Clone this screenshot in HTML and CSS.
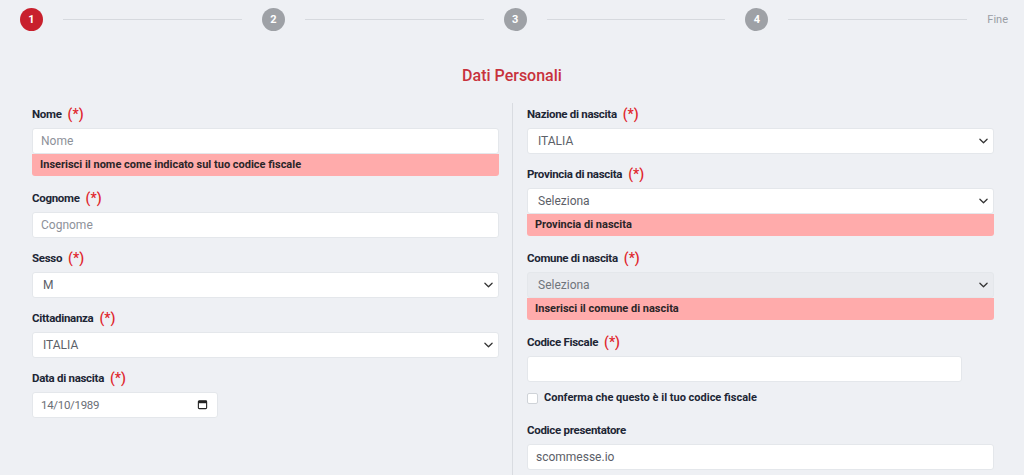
FILE: index.html
```html
<!DOCTYPE html>
<html lang="it">
<head>
<meta charset="utf-8">
<title>Registrazione - Dati Personali</title>
<link rel="stylesheet" href="styles.css">
</head>
<body>
<nav class="stepper">
  <span class="step-dot active">1</span>
  <span class="step-line"></span>
  <span class="step-dot">2</span>
  <span class="step-line"></span>
  <span class="step-dot">3</span>
  <span class="step-line"></span>
  <span class="step-dot">4</span>
  <span class="step-line"></span>
  <span class="step-end">Fine</span>
</nav>

<h1 class="section-title">Dati Personali</h1>

<form class="form-grid">
  <div class="col col-left">
    <div class="field">
      <label class="label">Nome <span class="req">(*)</span></label>
      <input class="control" type="text" placeholder="Nome">
      <div class="error">Inserisci il nome come indicato sul tuo codice fiscale</div>
    </div>
    <div class="field">
      <label class="label">Cognome <span class="req">(*)</span></label>
      <input class="control" type="text" placeholder="Cognome">
    </div>
    <div class="field">
      <label class="label">Sesso <span class="req">(*)</span></label>
      <div class="select-wrap">
        <select class="control select"><option>M</option><option>F</option></select>
        <svg class="chev" viewBox="0 0 10 6"><path d="M1 1l4 4 4-4" fill="none" stroke="#333" stroke-width="1.4" stroke-linecap="round" stroke-linejoin="round"/></svg>
      </div>
    </div>
    <div class="field">
      <label class="label">Cittadinanza <span class="req">(*)</span></label>
      <div class="select-wrap">
        <select class="control select"><option>ITALIA</option></select>
        <svg class="chev" viewBox="0 0 10 6"><path d="M1 1l4 4 4-4" fill="none" stroke="#333" stroke-width="1.4" stroke-linecap="round" stroke-linejoin="round"/></svg>
      </div>
    </div>
    <div class="field">
      <label class="label">Data di nascita <span class="req">(*)</span></label>
      <div class="date-wrap">
        <input class="control date" type="text" value="14/10/1989">
        <svg class="cal" viewBox="0 0 12 12"><rect x="1.5" y="2" width="9" height="8.5" rx="1" fill="none" stroke="#222" stroke-width="1.2"/><rect x="1.5" y="2" width="9" height="2.6" fill="#222"/></svg>
      </div>
    </div>
  </div>

  <div class="col col-right">
    <div class="field">
      <label class="label">Nazione di nascita <span class="req">(*)</span></label>
      <div class="select-wrap">
        <select class="control select"><option>ITALIA</option></select>
        <svg class="chev" viewBox="0 0 10 6"><path d="M1 1l4 4 4-4" fill="none" stroke="#333" stroke-width="1.4" stroke-linecap="round" stroke-linejoin="round"/></svg>
      </div>
    </div>
    <div class="field">
      <label class="label">Provincia di nascita <span class="req">(*)</span></label>
      <div class="select-wrap">
        <select class="control select"><option>Seleziona</option></select>
        <svg class="chev" viewBox="0 0 10 6"><path d="M1 1l4 4 4-4" fill="none" stroke="#333" stroke-width="1.4" stroke-linecap="round" stroke-linejoin="round"/></svg>
      </div>
      <div class="error">Provincia di nascita</div>
    </div>
    <div class="field">
      <label class="label">Comune di nascita <span class="req">(*)</span></label>
      <div class="select-wrap">
        <select class="control select" disabled><option>Seleziona</option></select>
        <svg class="chev" viewBox="0 0 10 6"><path d="M1 1l4 4 4-4" fill="none" stroke="#333" stroke-width="1.4" stroke-linecap="round" stroke-linejoin="round"/></svg>
      </div>
      <div class="error">Inserisci il comune di nascita</div>
    </div>
    <div class="field">
      <label class="label">Codice Fiscale <span class="req">(*)</span></label>
      <input class="control control-cf" type="text">
    </div>
    <label class="check-row">
      <input class="check" type="checkbox">
      <span>Conferma che questo è il tuo codice fiscale</span>
    </label>
    <div class="field">
      <label class="label">Codice presentatore</label>
      <input class="control" type="text" value="scommesse.io">
    </div>
  </div>
</form>
</body>
</html>
```

FILE: styles.css
```css
* {
  box-sizing: border-box;
}

body {
  margin: 0;
  background: #eef0f4;
  font-family: Roboto, "Liberation Sans", sans-serif;
  color: #1d2635;
  overflow: hidden;
}

/* progress steps */
.stepper {
  display: flex;
  align-items: center;
  padding: 8px 16px 0 20px;
  height: 31px;
}

.step-dot {
  width: 23px;
  height: 23px;
  border-radius: 50%;
  background: #9ea1a6;
  color: #fff;
  font-size: 11px;
  font-weight: 700;
  display: flex;
  align-items: center;
  justify-content: center;
  flex: none;
}

.step-dot.active {
  background: #c8202d;
}

.step-line {
  flex: 1;
  height: 1px;
  background: #d6d9de;
  margin: 0 20px;
}

.step-line:last-of-type {
  margin-right: 18px;
}

.step-end {
  font-size: 11px;
  color: #9a9ea5;
}

.section-title {
  margin: 35px 0 0;
  text-align: center;
  font-size: 16px;
  line-height: 20px;
  font-weight: 500;
  color: #c8323c;
}

/* two-column form */
.form-grid {
  display: grid;
  grid-template-columns: 467px 482px;
  column-gap: 13px;
  padding: 0 30px 0 32px;
  margin-top: 17px;
}

.col {
  display: flex;
  flex-direction: column;
  align-items: stretch;
}

.col-right {
  border-left: 1px solid #d9dce1;
  padding-left: 14px;
  min-height: 380px;
}

.field {
  margin-top: 11px;
}

.field:first-child {
  margin-top: 2px;
}

.label {
  display: flex;
  align-items: center;
  height: 18px;
  margin-bottom: 5px;
  font-size: 11.5px;
  letter-spacing: -0.3px;
  font-weight: 700;
  color: #1d2635;
}

.req {
  color: #e0262c;
  font-size: 14px;
  letter-spacing: 0;
  font-weight: 500;
  margin-left: 6px;
}

.control {
  display: block;
  width: 100%;
  height: 26px;
  border: 1px solid #e4e7eb;
  border-radius: 3px;
  background: #fff;
  padding: 0 8px;
  font-family: inherit;
  font-size: 12px;
  color: #5c6068;
  outline: none;
}

.control::placeholder {
  color: #8d9199;
}

.control-cf {
  width: 435px;
}

.select-wrap,
.date-wrap {
  position: relative;
}

.select {
  appearance: none;
  -webkit-appearance: none;
  padding-left: 10px;
}

.select:disabled {
  background: #e9ebef;
  color: #70757c;
  opacity: 1;
}

.chev {
  position: absolute;
  right: 6px;
  top: 10px;
  width: 9px;
  height: 6px;
}

.date-wrap {
  width: 186px;
}

.date {
  color: #6a6e75;
  font-size: 11.5px;
  letter-spacing: -0.3px;
}

.cal {
  position: absolute;
  right: 10px;
  top: 7px;
  width: 11px;
  height: 11px;
}

.error {
  height: 22px;
  line-height: 22px;
  background: #ffabab;
  border-radius: 0 0 3px 3px;
  padding: 0 8px;
  font-size: 11px;
  font-weight: 700;
  color: #2b2528;
}

.field:has(.error) {
  padding-bottom: 2px;
}

.check-row {
  display: flex;
  align-items: center;
  margin-top: 9px;
  font-size: 11px;
  font-weight: 700;
  color: #1d2635;
}

.check {
  width: 11px;
  height: 11px;
  margin: 2px 6px 0 0;
  appearance: none;
  -webkit-appearance: none;
  background: #fff;
  border: 1px solid #cfd3d8;
  border-radius: 2px;
}

.check-row + .field {
  margin-top: 17px;
}
```
